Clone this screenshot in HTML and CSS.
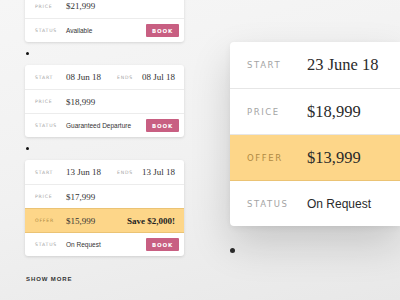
FILE: index.html
```html
<!DOCTYPE html>
<html lang="en">
<head>
  <meta charset="UTF-8">
  <meta name="viewport" content="width=device-width, initial-scale=1.0">
  <title>Departures</title>
  <link rel="stylesheet" href="styles.css">
</head>
<body>
  <div class="list">
    <div class="card card-cut">
      <div class="row">
        <span class="label">Price</span>
        <span class="value">$21,999</span>
      </div>
      <div class="row">
        <span class="label">Status</span>
        <span class="status">Available</span>
        <button class="book">Book</button>
      </div>
    </div>
    <span class="dot"></span>

    <div class="card">
      <div class="row">
        <span class="label">Start</span>
        <span class="value date">08 Jun 18</span>
        <span class="label ends">Ends</span>
        <span class="value">08 Jul 18</span>
      </div>
      <div class="row">
        <span class="label">Price</span>
        <span class="value">$18,999</span>
      </div>
      <div class="row">
        <span class="label">Status</span>
        <span class="status">Guaranteed Departure</span>
        <button class="book">Book</button>
      </div>
    </div>
    <span class="dot"></span>

    <div class="card">
      <div class="row">
        <span class="label">Start</span>
        <span class="value date">13 Jun 18</span>
        <span class="label ends">Ends</span>
        <span class="value">13 Jul 18</span>
      </div>
      <div class="row">
        <span class="label">Price</span>
        <span class="value">$17,999</span>
      </div>
      <div class="row offer">
        <span class="label">Offer</span>
        <span class="value">$15,999</span>
        <span class="save">Save $2,000!</span>
      </div>
      <div class="row">
        <span class="label">Status</span>
        <span class="status">On Request</span>
        <button class="book">Book</button>
      </div>
    </div>

    <a class="more" href="#">Show more</a>
  </div>

  <div class="detail">
    <div class="card card-lg">
      <div class="row">
        <span class="label">Start</span>
        <span class="value">23 June 18</span>
      </div>
      <div class="row">
        <span class="label">Price</span>
        <span class="value">$18,999</span>
      </div>
      <div class="row offer">
        <span class="label">Offer</span>
        <span class="value">$13,999</span>
      </div>
      <div class="row">
        <span class="label">Status</span>
        <span class="status">On Request</span>
      </div>
    </div>
    <span class="dot dot-lg"></span>
  </div>
</body>
</html>
```

FILE: styles.css
```css
body {
  margin: 0;
  width: 400px;
  height: 300px;
  overflow: hidden;
  display: flex;
  align-items: flex-start;
  background: linear-gradient(165deg, #f6f6f6 0%, #f1f1f1 50%, #e8e8e8 100%);
  font-family: 'Liberation Sans', Arial, sans-serif;
  color: #333;
}

/* left column: small cards */
.list {
  width: 159px;
  flex-shrink: 0;
  margin: 0 0 0 25px;
  display: flex;
  flex-direction: column;
}

.card {
  background: #fff;
  border-radius: 3px;
  box-shadow: 0 1px 3px rgba(0, 0, 0, 0.13);
  overflow: hidden;
}

.card-cut {
  margin-top: -6px;
  border-radius: 0 0 3px 3px;
}

.row {
  height: 23px;
  display: flex;
  align-items: center;
  padding: 0 5px 0 10px;
  border-top: 1px solid #ececec;
}

.row:first-child {
  border-top: none;
  height: 24px;
}

.label {
  width: 31px;
  flex-shrink: 0;
  font-family: 'DejaVu Sans', sans-serif;
  font-size: 4.6px;
  letter-spacing: 0.8px;
  text-transform: uppercase;
  color: #a4a4a4;
}

.value {
  font-family: 'Liberation Serif', 'Times New Roman', serif;
  font-size: 9px;
  color: #333;
  white-space: nowrap;
}

.value.date {
  width: 51px;
}

.label.ends {
  width: 25px;
}

.status {
  font-size: 6.5px;
  color: #333;
  flex: 1;
  white-space: nowrap;
}

.book {
  width: 33px;
  height: 13px;
  padding: 0;
  border: none;
  border-radius: 1px;
  background: #c85f82;
  color: #fff;
  font-family: 'DejaVu Sans', sans-serif;
  font-weight: bold;
  font-size: 5.5px;
  letter-spacing: 0.8px;
  text-transform: uppercase;
}

.offer {
  background: #fdd689;
  border-top: 1px solid #ebc374;
  border-bottom: 1px solid #ebc374;
  height: 23px;
}

.offer .label {
  color: #b08a44;
}

.offer + .row {
  border-top: none;
}

.save {
  margin-left: auto;
  padding-right: 4px;
  font-family: 'Liberation Serif', serif;
  font-weight: bold;
  font-size: 9px;
  color: #222;
  white-space: nowrap;
}

.dot {
  width: 3px;
  height: 3px;
  margin: 10px 0 10px 1px;
  border-radius: 50%;
  background: #111;
}

.more {
  margin: 20px 0 0 1px;
  font-weight: bold;
  font-size: 6px;
  letter-spacing: 0.9px;
  text-transform: uppercase;
  text-decoration: none;
  color: #333;
}

/* right: enlarged card, cut by the window edge */
.detail {
  flex-shrink: 0;
  margin: 42px 0 0 46px;
  display: flex;
  flex-direction: column;
}

.card-lg {
  width: 170px;
  border-radius: 4px 0 0 4px;
  box-shadow: 0 18px 40px rgba(0, 0, 0, 0.16), 0 2px 6px rgba(0, 0, 0, 0.06);
}

.card-lg .row {
  height: 45px;
  padding: 0 0 0 17px;
  border-top-color: #e6e6e6;
}

.card-lg .row:first-child {
  height: 46px;
}

.card-lg .offer {
  height: 45px;
}

.card-lg .label {
  width: 60px;
  font-size: 8.5px;
  letter-spacing: 1.6px;
}

.card-lg .value {
  font-size: 16.5px;
  color: #2a2a2a;
}

.card-lg .status {
  font-size: 12px;
  color: #2a2a2a;
}

.dot-lg {
  width: 5px;
  height: 5px;
  margin: 22px 0 0 0;
  background: #2a2a2a;
}
```
